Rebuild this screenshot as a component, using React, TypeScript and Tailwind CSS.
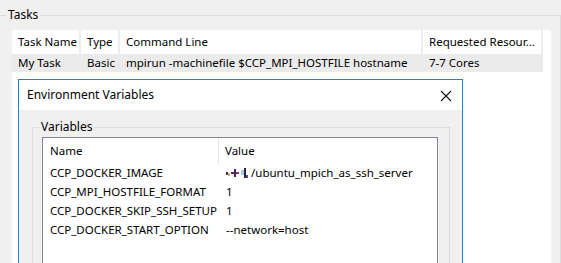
export default function App() {
  const vars = [
    { name: "CCP_DOCKER_IMAGE", value: "image" },
    { name: "CCP_MPI_HOSTFILE_FORMAT", value: "1" },
    { name: "CCP_DOCKER_SKIP_SSH_SETUP", value: "1" },
    { name: "CCP_DOCKER_START_OPTION", value: "--network=host" },
  ];

  return (
    <div
      className="relative w-[561px] h-[263px] overflow-hidden bg-[#f0f0f0] text-[11.5px] text-black"
      style={{ fontFamily: '"Segoe UI", "Noto Sans", sans-serif' }}
    >
      {/* Tasks group */}
      <div className="relative mt-[15px] ml-[-1px] h-[260px] border border-[#dcdcdc] pt-[14px] pl-[12px] pr-[9px]">
        <span className="absolute left-[6px] top-[-9px] bg-[#f0f0f0] px-[2px] leading-[16px] text-[12px]">Tasks</span>

        <div className="h-[240px] bg-white whitespace-nowrap">
          {/* header */}
          <div className="flex h-[24px] items-center">
            <div className="w-[69px] pl-[6px] border-r-2 border-[#ececec] h-full flex items-center">Task Name</div>
            <div className="w-[39px] pl-[6px] border-r-2 border-[#ececec] h-full flex items-center">Type</div>
            <div className="w-[303px] pl-[6px] border-r-2 border-[#ececec] h-full flex items-center">Command Line</div>
            <div className="w-[120px] pl-[6px] border-r-2 border-[#ececec] h-full flex items-center">Requested Resour...</div>
          </div>
          {/* row */}
          <div className="flex h-[18px] w-[531px] items-center bg-[#ebebeb]">
            <div className="w-[69px] pl-[6px]">My Task</div>
            <div className="w-[39px] pl-[6px]">Basic</div>
            <div className="w-[303px] pl-[6px]">mpirun -machinefile $CCP_MPI_HOSTFILE hostname</div>
            <div className="w-[120px] pl-[6px]">7-7 Cores</div>
          </div>
        </div>
      </div>

      {/* Environment Variables dialog */}
      <div className="absolute left-[18px] top-[79px] w-[445px] h-[200px] border border-[#1883d7] bg-[#f0f0f0]">
        <div className="flex h-[30px] items-center justify-between bg-white pl-[8px] pr-[10px]">
          <span className="text-[12px]">Environment Variables</span>
          <svg width="12" height="12" viewBox="0 0 12 12" className="mt-[1px]">
            <path d="M1 1 L11 11 M11 1 L1 11" stroke="#111" strokeWidth="1.1" />
          </svg>
        </div>

        <div className="pt-[17px] pl-[13px] pr-[12px]">
          <div className="relative h-[150px] border border-[#dcdcdc] pt-[9px] pl-[9px] pr-[11px]">
            <span className="absolute left-[6px] top-[-9px] bg-[#f0f0f0] px-[2px] leading-[16px] text-[12px]">Variables</span>
            <div className="h-[140px] border border-[#828790] bg-white whitespace-nowrap">
              <div className="flex h-[25px] items-center">
                <div className="w-[176px] h-full pl-[7px] flex items-center border-r border-[#e5e5e5]">Name</div>
                <div className="pl-[6px]">Value</div>
              </div>
              {vars.map((v) => (
                <div key={v.name} className="flex h-[19px] items-center">
                  <div className="w-[176px] pl-[7px]">{v.name}</div>
                  <div className="pl-[7px] flex items-center">
                    {v.value === "image" ? (
                      <>
                        <span className="inline-flex items-center h-[12px] w-[24px] mr-[1px]">
                          <span className="w-[2px] h-[3px] bg-[#3a3a5a] mt-[2px]" />
                          <span className="w-[2px] h-[3px] bg-[#e8a860] mt-[4px]" />
                          <span className="w-[3px] h-[2px] bg-[#5a2a5a] ml-[1px]" />
                          <span className="w-[2px] h-[8px] bg-[#502060]" />
                          <span className="w-[3px] h-[2px] bg-[#7a3a6a]" />
                          <span className="w-[3px] h-[5px] bg-[#a0d0e8] ml-[2px]" />
                          <span className="w-[2px] h-[10px] bg-[#302040]" />
                          <span className="w-[2px] h-[3px] bg-[#6040a0] mt-[8px]" />
                        </span>
                        <span>/ubuntu_mpich_as_ssh_server</span>
                      </>
                    ) : (
                      v.value
                    )}
                  </div>
                </div>
              ))}
            </div>
          </div>
        </div>
      </div>
    </div>
  );
}
